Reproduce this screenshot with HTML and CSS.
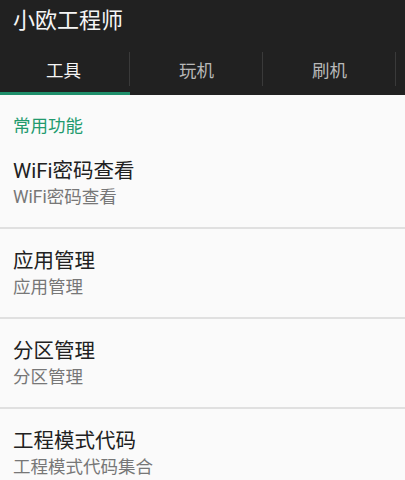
FILE: index.html
```html
<!DOCTYPE html>
<html lang="zh-CN">
<head>
    <meta charset="UTF-8">
    <meta name="viewport" content="width=device-width, initial-scale=1.0">
    <title>小欧工程师</title>
    <link rel="stylesheet" href="styles.css">
</head>
<body>
    <div class="appbar">
        <div class="title">小欧工程师</div>
        <ul class="tabs">
            <li class="tab active">工具</li>
            <li class="tab">玩机</li>
            <li class="tab">刷机</li>
        </ul>
    </div>
    <div class="content">
        <div class="category">常用功能</div>
        <div class="item">
            <div class="item-title">WiFi密码查看</div>
            <div class="item-sub">WiFi密码查看</div>
        </div>
        <div class="item">
            <div class="item-title">应用管理</div>
            <div class="item-sub">应用管理</div>
        </div>
        <div class="item">
            <div class="item-title">分区管理</div>
            <div class="item-sub">分区管理</div>
        </div>
        <div class="item">
            <div class="item-title">工程模式代码</div>
            <div class="item-sub">工程模式代码集合</div>
        </div>
    </div>
</body>
</html>
```

FILE: styles.css
```css
*{margin: 0px;padding: 0px;}
body{
    background: #fafafa;
    font-family: Roboto, "Noto Sans CJK SC", sans-serif;
}
.appbar{
    background: #212121;
}
.title{
    height: 41px;
    line-height: 41px;
    padding-left: 13px;
    font-size: 22px;
    color: #f5f5f5;
}
.tabs{
    list-style: none;
    display: flex;
    height: 54px;
    margin-left: -3px;
}
.tab{
    width: 133px;
    flex: none;
    display: flex;
    align-items: center;
    justify-content: center;
    padding-top: 5px;
    box-sizing: border-box;
    font-size: 17.5px;
    color: #b8b8b8;
    position: relative;
    border-bottom: 3px solid transparent;
}
.tab::after{
    content: '';
    position: absolute;
    right: 0px;
    top: 11px;
    bottom: 6px;
    width: 1px;
    background: #3a3a3a;
}
.tab.active{
    color: #f5f5f5;
    border-bottom-color: #1f8f6b;
}
.content{
    padding-top: 18px;
}
.category{
    padding-left: 13px;
    font-size: 17.5px;
    line-height: 26px;
    color: #229a6e;
}
.item{
    padding: 17px 13px 0px;
    height: 71px;
    border-bottom: 2px solid #e0e0e0;
}
.item-title{
    font-size: 20.5px;
    line-height: 30px;
    color: #212121;
}
.item-sub{
    font-size: 17.5px;
    line-height: 22px;
    color: #777;
}
```
